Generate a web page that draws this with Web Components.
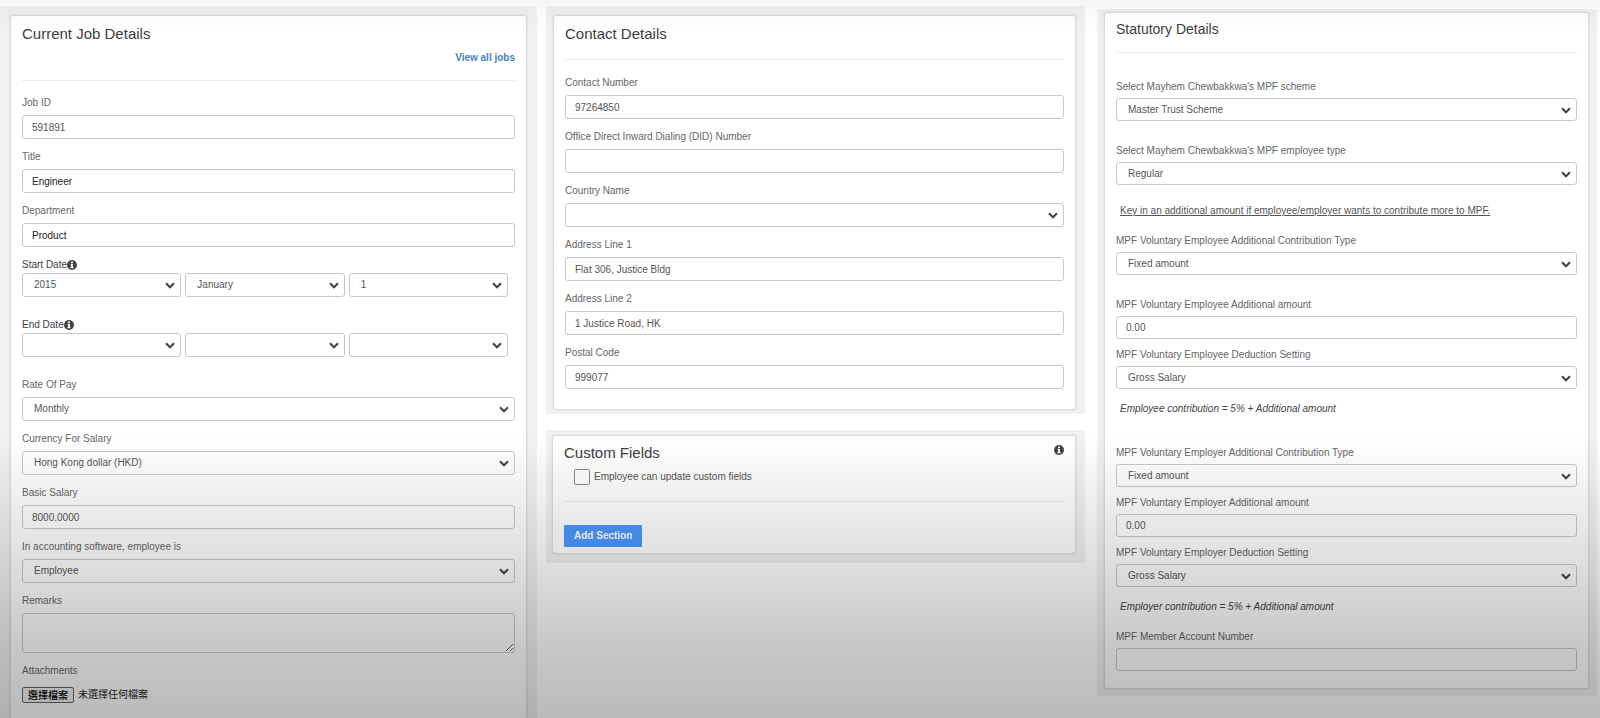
<!DOCTYPE html>
<html lang="en">
<head>
<meta charset="utf-8">
<title>Employee details</title>
<style>
  html, body { margin: 0; background: #fff; }
  body { font-family: "Liberation Sans", Arial, "Noto Sans CJK TC", sans-serif; font-size: 10px; line-height: 14px; color: #555; }
</style>
</head>
<body>
<employee-page>
  <form-panel slot="job" heading="Current Job Details" class="job">
    <text-link slot="links" href="#jobs">View all jobs</text-link>
    <form-field label="Job ID" value="591891"></form-field>
    <form-field label="Title" value="Engineer" strong></form-field>
    <form-field label="Department" value="Product" strong></form-field>
    <date-field label="Start Date" year="2015" month="January" day="1"></date-field>
    <date-field label="End Date"></date-field>
    <form-field kind="select" label="Rate Of Pay" value="Monthly"></form-field>
    <form-field kind="select" label="Currency For Salary" value="Hong Kong dollar (HKD)"></form-field>
    <form-field label="Basic Salary" value="8000.0000"></form-field>
    <form-field kind="select" label="In accounting software, employee is" value="Employee"></form-field>
    <form-field kind="textarea" label="Remarks"></form-field>
    <file-field label="Attachments" button="選擇檔案" status="未選擇任何檔案"></file-field>
  </form-panel>

  <form-panel slot="contact" heading="Contact Details" class="contact">
    <form-field label="Contact Number" value="97264850"></form-field>
    <form-field label="Office Direct Inward Dialing (DID) Number"></form-field>
    <form-field kind="select" label="Country Name"></form-field>
    <form-field label="Address Line 1" value="Flat 306, Justice Bldg"></form-field>
    <form-field label="Address Line 2" value="1 Justice Road, HK"></form-field>
    <form-field label="Postal Code" value="999077"></form-field>
  </form-panel>

  <form-panel slot="contact" heading="Custom Fields" class="custom">
    <info-icon slot="corner"></info-icon>
    <check-field slot="links" label="Employee can update custom fields"></check-field>
    <action-button>Add Section</action-button>
  </form-panel>

  <form-panel slot="statutory" heading="Statutory Details" class="statutory">
    <form-field kind="select" class="apart" label="Select Mayhem Chewbakkwa's MPF scheme" value="Master Trust Scheme"></form-field>
    <form-field kind="select" label="Select Mayhem Chewbakkwa's MPF employee type" value="Regular"></form-field>
    <form-note kind="underline">Key in an additional amount if employee/employer wants to contribute more to MPF.</form-note>
    <form-field kind="select" class="apart" label="MPF Voluntary Employee Additional Contribution Type" value="Fixed amount"></form-field>
    <form-field label="MPF Voluntary Employee Additional amount" value="0.00"></form-field>
    <form-field kind="select" label="MPF Voluntary Employee Deduction Setting" value="Gross Salary"></form-field>
    <form-note kind="formula" class="group-end">Employee contribution = 5% + Additional amount</form-note>
    <form-field kind="select" label="MPF Voluntary Employer Additional Contribution Type" value="Fixed amount"></form-field>
    <form-field label="MPF Voluntary Employer Additional amount" value="0.00"></form-field>
    <form-field kind="select" label="MPF Voluntary Employer Deduction Setting" value="Gross Salary"></form-field>
    <form-note kind="formula">Employer contribution = 5% + Additional amount</form-note>
    <form-field label="MPF Member Account Number"></form-field>
  </form-panel>
</employee-page>

<script>
const esc = s => (s || '').replace(/&/g, '&amp;').replace(/"/g, '&quot;').replace(/</g, '&lt;');

class Base extends HTMLElement {
  connectedCallback() {
    if (this.shadowRoot) return;
    this.attachShadow({ mode: 'open' }).innerHTML = this.render();
    this.ready();
  }
  attr(name) { return esc(this.getAttribute(name)); }
  ready() {}
}

/* Rules shared by every labelled control */
const controlCss = `
  * { box-sizing: border-box; }
  :host { display: block; }
  label { display: block; line-height: 14px; color: #666; }
  input, select, textarea {
    display: block; width: 100%; height: var(--control-height, 24px); margin: 0;
    border: 1px solid #c6c8ca; border-radius: 3px; background: transparent;
    font: inherit; color: #555; padding: 0 9px; outline-offset: 0;
  }
  select { appearance: none; padding: 0 24px 0 11px; }
  .pick { position: relative; display: block; }
  .pick svg { position: absolute; right: 6px; top: 50%; margin-top: -3px; pointer-events: none; }
`;
const chevron = `<svg width="10" height="7" viewBox="0 0 10 7" aria-hidden="true"><path d="M1 1.2 5 5.2 9 1.2" fill="none" stroke="#444" stroke-width="2.1"/></svg>`;
const infoGlyph = `<svg width="10" height="10" viewBox="0 0 10 10" aria-hidden="true"><circle cx="5" cy="5" r="5" fill="#444"/><path d="M4.1 1.4h1.8v1.5H4.1zM3.6 3.8h2.3v3.3h.6v1.1H3.5V7.1h.6V4.9h-.5z" fill="#fff"/></svg>`;

customElements.define('employee-page', class extends Base {
  render() {
    return `<style>
      :host { display: block; position: relative; min-height: 100vh; }
      main { display: grid; grid-template-columns: 537fr 539fr 503fr; column-gap: 9px; min-height: 100vh; padding-right: 3px; box-sizing: border-box; }
      .col { display: flex; flex-direction: column; padding-top: 6px; min-width: 0; }
      .mid { gap: 16px; }
      .last { padding: 9px 0 0 3px; }
      .shade { position: absolute; inset: 0; pointer-events: none;
        background: linear-gradient(to bottom, rgba(0,0,0,.035) 0, rgba(0,0,0,0) 32px, rgba(0,0,0,0) 60%, rgba(0,0,0,.05) 67%, rgba(0,0,0,.13) 78%, rgba(0,0,0,.215) 89%, rgba(0,0,0,.275) 100%); }
      ::slotted(.job) { flex: 1; }
    </style>
    <main>
      <div class="col"><slot name="job"></slot></div>
      <div class="col mid"><slot name="contact"></slot></div>
      <div class="col last"><slot name="statutory"></slot></div>
    </main><div class="shade"></div>`;
  }
});

customElements.define('form-panel', class extends Base {
  render() {
    return `<style>
      * { box-sizing: border-box; }
      :host { display: flex; background: #f1f1f1; padding: 9px 9px 4px 7px; --title: 15px; --head: 8px; --before-rule: 15px; --after-rule: 15px; --gap: 11px; }
      :host(.job) { padding: 9px 10px 0 10px; }
      :host(.contact) { --after-rule: 16px; }
      :host(.custom) { padding: 5px 9px 9px 6px; --head: 7px; --before-rule: 16px; --after-rule: 23px; }
      :host(.statutory) { padding: 3px 8px 7px 7px; --title: 14px; --head: 6px; --before-rule: 13px; --after-rule: 27px; --gap: 9px; --control-height: 23px; --label-gap: 4px; }
      section { flex: 1; min-width: 0; background: #fff; border: 1px solid #dcdcdc; border-radius: 3px; box-shadow: 0 0 2px rgba(0,0,0,.14); padding: var(--head) 11px 20px; }
      :host(.job) section { border-bottom: 0; border-radius: 3px 3px 0 0; }
      :host(.custom) section { padding-bottom: 6px; }
      :host(.statutory) section { padding-bottom: 17px; }
      header { display: flex; justify-content: space-between; align-items: flex-start; }
      h2 { margin: 0; font-size: var(--title); line-height: 20px; font-weight: 400; color: #3d3d3d; }
      hr { margin: var(--before-rule) 0 var(--after-rule); border: 0; height: 1px; background: #ebebeb; }
      .fields { display: flex; flex-direction: column; gap: var(--gap); }
      ::slotted(.apart) { margin-bottom: 14px; }
      ::slotted(.group-end) { margin-bottom: 14px; }
    </style>
    <section>
      <header><h2>${this.attr('heading')}</h2><slot name="corner"></slot></header>
      <slot name="links"></slot>
      <hr>
      <div class="fields"><slot></slot></div>
    </section>`;
  }
});

customElements.define('form-field', class extends Base {
  render() {
    const kind = this.getAttribute('kind'), v = this.attr('value');
    const control =
      kind === 'select' ? `<span class="pick"><select id="c"><option>${v}</option></select>${chevron}</span>` :
      kind === 'textarea' ? `<textarea id="c">${v}</textarea>` :
      `<input id="c" type="text" value="${v}">`;
    return `<style>${controlCss}
      label { margin-bottom: var(--label-gap, 5px); }
      textarea { height: 40px; resize: vertical; }
      :host([strong]) input { color: #222; }
    </style><label for="c">${this.attr('label')}</label>${control}`;
  }
});

customElements.define('date-field', class extends Base {
  render() {
    const part = (id) => `<span class="pick"><select id="${id}" aria-label="${this.attr('label')} ${id}"><option>${this.attr(id)}</option></select>${chevron}</span>`;
    return `<style>${controlCss}
      :host { margin-bottom: 10px; }
      .head { display: flex; align-items: center; margin-bottom: 1px; }
      .head label { color: #3d3d3d; }
      .row { display: grid; grid-template-columns: 1fr 1fr 1fr; gap: 4px; padding-right: 7px; }
    </style>
    <div class="head"><label for="year">${this.attr('label')}</label>${infoGlyph}</div>
    <div class="row">${part('year')}${part('month')}${part('day')}</div>`;
  }
});

customElements.define('file-field', class extends Base {
  render() {
    return `<style>${controlCss}
      .row { display: flex; align-items: center; gap: 4px; margin-top: 9px; color: #222; }
      button { height: 16px; padding: 0 5px; margin: 0; border: 1px solid #666; border-radius: 2px; background: #f4f4f4; font: inherit; font-weight: 500; line-height: 13px; color: #000; }
      input { display: none; }
    </style>
    <label for="f">${this.attr('label')}</label>
    <div class="row" lang="zh-Hant"><button type="button">${this.attr('button')}</button><span>${this.attr('status')}</span><input id="f" type="file"></div>`;
  }
  ready() {
    const root = this.shadowRoot;
    root.querySelector('button').onclick = () => root.querySelector('input').click();
  }
});

customElements.define('check-field', class extends Base {
  render() {
    return `<style>
      :host { display: block; padding: 6px 0 0 10px; }
      div { display: flex; align-items: center; gap: 4px; }
      input { appearance: none; box-sizing: border-box; width: 16px; height: 16px; margin: 0; border: 1px solid #8a8a8a; border-radius: 2px; background: #fff; }
      input:checked { background: #4285e8; }
      label { line-height: 14px; }
    </style><div><input id="c" type="checkbox"><label for="c">${this.attr('label')}</label></div>`;
  }
});

customElements.define('form-note', class extends Base {
  render() {
    return `<style>
      :host { display: block; padding: 4px 0 7px 4px; }
      p { margin: 0; line-height: 14px; }
      :host([kind="underline"]) { padding-top: 10px; }
      :host([kind="underline"]) p { text-decoration: underline; }
      :host([kind="formula"]) p { font-style: italic; color: #444; }
    </style><p><slot></slot></p>`;
  }
});

customElements.define('text-link', class extends Base {
  render() {
    return `<style>
      :host { display: block; margin-top: 7px; text-align: right; }
      a { display: block; font-weight: 700; color: #4a83bb; text-decoration: none; }
    </style><a href="${this.attr('href')}"><slot></slot></a>`;
  }
});

customElements.define('action-button', class extends Base {
  render() {
    return `<style>
      :host { display: block; }
      button { display: block; height: 22px; padding: 0 10px; margin: 0; border: 0; border-radius: 1px; background: #4c98ff; font: inherit; font-weight: 700; color: #fff; }
    </style><button type="button"><slot></slot></button>`;
  }
});

customElements.define('info-icon', class extends Base {
  render() {
    return `<style>:host { display: block; padding-top: 2px; } svg { display: block; }</style>${infoGlyph}`;
  }
});
</script>
</body>
</html>
